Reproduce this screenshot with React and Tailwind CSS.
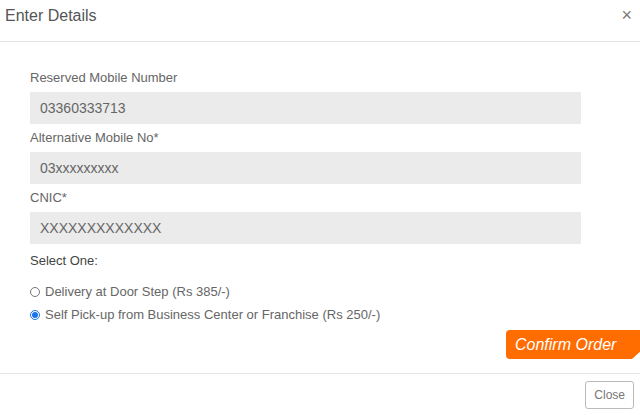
import React, { useState } from 'react';

const fields = [
  { label: 'Reserved Mobile Number', value: '03360333713' },
  { label: 'Alternative Mobile No*', value: '03xxxxxxxxx' },
  { label: 'CNIC*', value: 'XXXXXXXXXXXXX' },
];

const options = [
  { id: 'door', label: 'Delivery at Door Step (Rs 385/-)' },
  { id: 'self', label: 'Self Pick-up from Business Center or Franchise (Rs 250/-)' },
];

export default function App() {
  const [choice, setChoice] = useState('self');

  return (
    <div
      className="w-[640px] h-[415px] bg-white overflow-hidden flex flex-col text-[#555]"
      style={{ fontFamily: '"Liberation Sans", Arial, sans-serif' }}
    >
      {/* header */}
      <div className="h-[42px] shrink-0 flex items-center justify-between pl-[5px] pr-[8px] border-b border-[#e5e5e5]">
        <h4 className="text-[16px] text-[#555] leading-none -mt-[9px]">Enter Details</h4>
        <button className="text-[18px] text-[#777] leading-none -mt-[12px]">×</button>
      </div>

      {/* body */}
      <div className="flex-1 flex flex-col pl-[30px] pt-[28px]">
        {fields.map((f) => (
          <div key={f.label} className="flex flex-col">
            <label className="text-[13px] leading-[15px] text-[#666] mb-[7px]">{f.label}</label>
            <div className="w-[551px] h-[32px] bg-[#ebebeb] flex items-center pl-[10px] text-[14px] text-[#666] mb-[6px]">
              {f.value}
            </div>
          </div>
        ))}
        <div className="text-[13px] text-[#444] mt-[3px] leading-[15px]">Select One:</div>

        <div className="flex flex-col gap-[8px] mt-[16px]">
          {options.map((o) => (
            <label key={o.id} className="flex items-center gap-[5px] text-[13px] leading-[15px] text-[#666]">
              <input
                type="radio"
                name="delivery"
                checked={choice === o.id}
                onChange={() => setChoice(o.id)}
                className="w-[10px] h-[10px] m-0 accent-[#1a73e8]"
              />
              {o.label}
            </label>
          ))}
        </div>

        <div className="flex justify-end mt-[8px]">
          <button
            className="w-[134px] h-[29px] bg-[#ff6c00] text-white italic text-[16px] rounded-l-[4px] pl-[9px] text-left"
            style={{ clipPath: 'polygon(0 0, 100% 0, 100% 75%, 94% 100%, 0 100%)' }}
          >
            Confirm Order
          </button>
        </div>
      </div>

      {/* footer */}
      <div className="h-[42px] shrink-0 border-t border-[#e5e5e5] flex items-center justify-end pr-[6px]">
        <button className="h-[28px] px-[8px] border border-[#bbb] rounded-[3px] text-[12px] text-[#777] bg-white">
          Close
        </button>
      </div>
    </div>
  );
}
